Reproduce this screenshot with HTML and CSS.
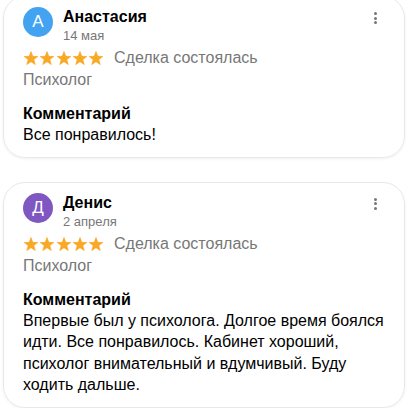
FILE: index.html
```html
<!DOCTYPE html>
<html lang="ru">
<head>
  <meta charset="UTF-8">
  <title>Отзывы</title>
  <link rel="stylesheet" href="styles.css">
</head>
<body>

  <svg width="0" height="0" class="defs">
    <symbol id="star" viewBox="-1 -1.2 18 18">
      <polygon points="8,0.6 9.94,5.93 15.6,6.1 11.14,9.62 12.75,15.1 8,11.9 3.25,15.1 4.86,9.62 0.4,6.1 6.06,5.93" fill="#f9a825" stroke="#f9a825" stroke-width="0.8" stroke-linejoin="round"/>
    </symbol>
  </svg>

  <div class="reviews">
    <!-- Review 1 -->
    <div class="review">
      <div class="review-head">
        <div class="avatar avatar-blue">А</div>
        <div class="author">
          <div class="name">Анастасия</div>
          <div class="date">14 мая</div>
        </div>
        <div class="menu"><span></span><span></span><span></span></div>
      </div>
      <div class="rating">
        <div class="stars">
          <svg><use href="#star"/></svg><svg><use href="#star"/></svg><svg><use href="#star"/></svg><svg><use href="#star"/></svg><svg><use href="#star"/></svg>
        </div>
        <span class="deal">Сделка состоялась</span>
      </div>
      <div class="category">Психолог</div>
      <div class="comment-title">Комментарий</div>
      <div class="comment">Все понравилось!</div>
    </div>

    <!-- Review 2 -->
    <div class="review">
      <div class="review-head">
        <div class="avatar avatar-purple">Д</div>
        <div class="author">
          <div class="name">Денис</div>
          <div class="date">2 апреля</div>
        </div>
        <div class="menu"><span></span><span></span><span></span></div>
      </div>
      <div class="rating">
        <div class="stars">
          <svg><use href="#star"/></svg><svg><use href="#star"/></svg><svg><use href="#star"/></svg><svg><use href="#star"/></svg><svg><use href="#star"/></svg>
        </div>
        <span class="deal">Сделка состоялась</span>
      </div>
      <div class="category">Психолог</div>
      <div class="comment-title">Комментарий</div>
      <div class="comment">Впервые был у психолога. Долгое время боялся идти. Все понравилось. Кабинет хороший, психолог внимательный и вдумчивый. Буду ходить дальше.</div>
    </div>
  </div>

</body>
</html>
```

FILE: styles.css
```css
body {
  margin: 0;
  font-family: "Liberation Sans", Arial, sans-serif;
  background: #fff;
  color: #000;
}

.defs {
  position: absolute;
}

.reviews {
  display: flex;
  flex-direction: column;
  gap: 24px;
  margin-top: -4px;
  padding: 0 3px;
}

.review {
  border: 1px solid #e8e8e8;
  border-radius: 22px;
  padding: 10px 19px 11px;
  box-shadow: 0 1px 3px rgba(0,0,0,0.06);
}

.review-head {
  display: flex;
  align-items: flex-start;
}

.avatar {
  width: 30px;
  height: 30px;
  border-radius: 50%;
  color: #fff;
  font-size: 17px;
  display: flex;
  align-items: center;
  justify-content: center;
  flex-shrink: 0;
}

.avatar-blue {
  background: #43a3f0;
}

.avatar-purple {
  background: #7e57c2;
}

.author {
  margin-left: 10px;
  flex: 1;
}

.name {
  font-size: 16px;
  font-weight: bold;
  line-height: 19px;
}

.date {
  font-size: 13px;
  color: #777;
  line-height: 20px;
}

.menu {
  display: flex;
  flex-direction: column;
  gap: 1.5px;
  margin: 5px 8px 0 0;
}

.menu span {
  width: 3px;
  height: 3px;
  border-radius: 50%;
  background: #777;
}

.rating {
  display: flex;
  align-items: center;
  margin-top: 1px;
  height: 22px;
}

.stars {
  display: flex;
  gap: 0.25px;
}

.stars svg {
  width: 16px;
  height: 16px;
}

.deal {
  font-size: 16px;
  color: #777;
  margin-left: 10px;
}

.category {
  font-size: 16px;
  color: #777;
  line-height: 22px;
}

.comment-title {
  font-size: 16px;
  font-weight: bold;
  line-height: 21px;
  margin-top: 12px;
}

.comment {
  font-size: 16px;
  line-height: 21.5px;
}
```
